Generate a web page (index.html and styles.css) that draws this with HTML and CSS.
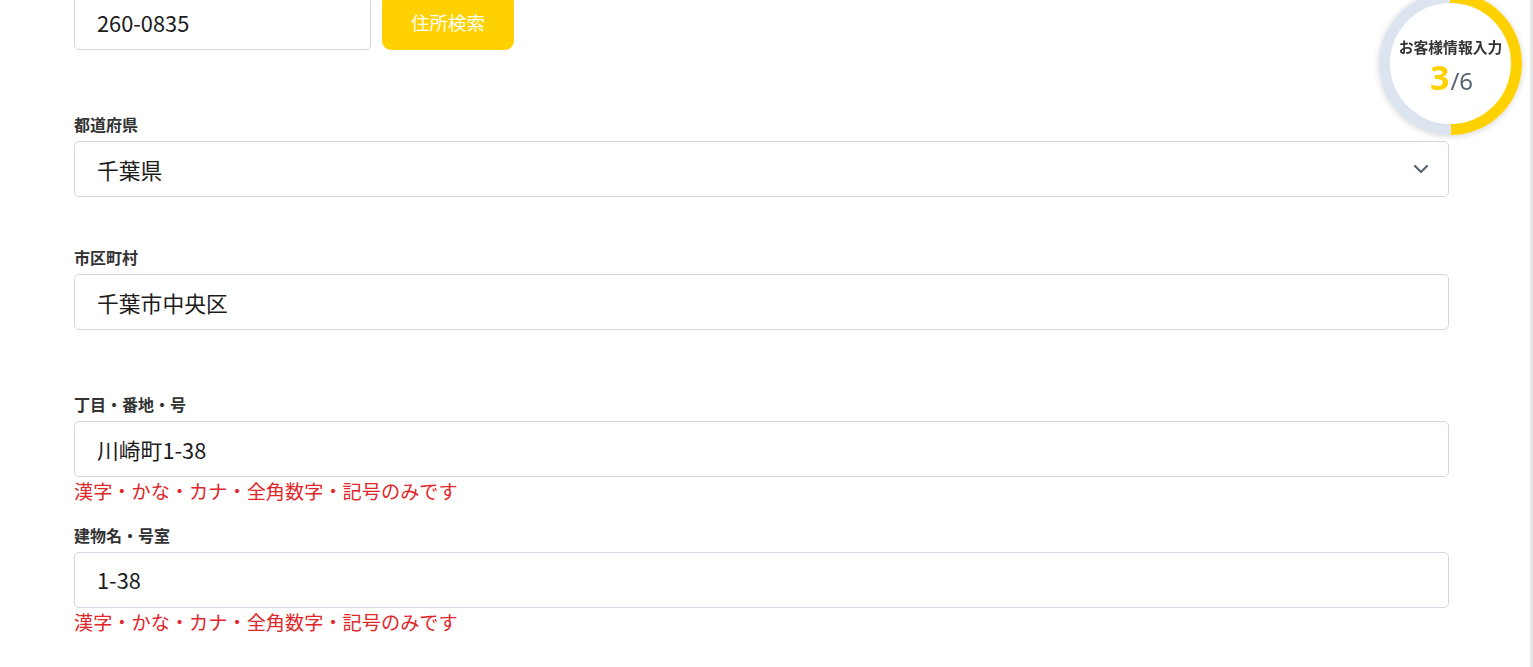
FILE: index.html
```html
<!DOCTYPE html>
<html lang="ja">
<head>
<meta charset="utf-8">
<title>お客様情報入力</title>
<link rel="stylesheet" href="styles.css">
</head>
<body>
<main class="form">
  <div class="zip-row">
    <input class="field zip" type="text" value="260-0835">
    <button class="search-btn" type="button">住所検索</button>
  </div>

  <div class="group gap-first">
    <label class="label">都道府県</label>
    <div class="select-wrap">
      <div class="field select">千葉県</div>
      <svg class="chevron" width="16" height="10" viewBox="0 0 16 10"><path d="M2 2l6 6 6-6" fill="none" stroke="#596273" stroke-width="2.2" stroke-linecap="round" stroke-linejoin="round"/></svg>
    </div>
  </div>

  <div class="group gap-md">
    <label class="label">市区町村</label>
    <input class="field" type="text" value="千葉市中央区">
  </div>

  <div class="group gap-lg">
    <label class="label">丁目・番地・号</label>
    <input class="field" type="text" value="川崎町1-38">
    <p class="error">漢字・かな・カナ・全角数字・記号のみです</p>
  </div>

  <div class="group gap-sm">
    <label class="label">建物名・号室</label>
    <input class="field" type="text" value="1-38">
    <p class="error">漢字・かな・カナ・全角数字・記号のみです</p>
  </div>
</main>

<div class="progress">
  <div class="progress-inner">
    <div class="progress-title">お客様情報入力</div>
    <div class="progress-count"><span class="cur">3</span><span class="total">/6</span></div>
  </div>
</div>

<div class="scroll-edge"></div>
</body>
</html>
```

FILE: styles.css
```css
html, body {
  margin: 0;
  padding: 0;
  background: #fff;
  overflow: hidden;
}

body {
  font-family: "Noto Sans CJK JP", "Noto Sans", sans-serif;
  color: #222;
}

.form {
  margin-top: -6px;
  padding-left: 74px;
  width: 1375px;
}

.zip-row {
  display: flex;
  gap: 11px;
}

.field {
  box-sizing: border-box;
  display: block;
  width: 100%;
  height: 56px;
  margin: 0;
  padding: 0 22px;
  border: 1px solid #cfd8e3;
  border-radius: 5px;
  background: #fff;
  font-family: "Noto Sans CJK JP", "Noto Sans", sans-serif;
  font-size: 21.8px;
  color: #1c1c1c;
  outline: none;
}

.field.zip {
  width: 297px;
}

.search-btn {
  width: 132px;
  height: 56px;
  border: 0;
  border-radius: 9px;
  background: #ffd100;
  color: #fff;
  font-family: "Noto Sans CJK JP", "Noto Sans", sans-serif;
  font-size: 18.5px;
  padding: 0;
}

.group {
  display: flex;
  flex-direction: column;
}

.gap-first { margin-top: 64px; }
.gap-lg { margin-top: 64px; }
.gap-md { margin-top: 50px; }
.gap-sm { margin-top: 19px; }

.label {
  font-size: 16px;
  font-weight: 700;
  line-height: 20px;
  color: #333;
  margin-bottom: 7px;
}

.select-wrap {
  position: relative;
}

.select {
  display: flex;
  align-items: center;
}

.chevron {
  position: absolute;
  right: 20px;
  top: 23px;
}

.error {
  margin: 0;
  font-size: 19.2px;
  line-height: 28.8px;
  color: #e0262a;
}

.progress {
  position: fixed;
  top: -8px;
  right: 11px;
  width: 143px;
  height: 143px;
  border-radius: 50%;
  background: conic-gradient(#ffd100 0deg 180deg, #dce5ef 180deg 360deg);
  box-shadow: 0 1px 6px rgba(0, 0, 0, 0.18);
  display: flex;
  align-items: center;
  justify-content: center;
}

.progress-inner {
  width: 121px;
  height: 121px;
  border-radius: 50%;
  background: #fff;
  display: flex;
  flex-direction: column;
  align-items: center;
  justify-content: center;
  padding-top: 10px;
  box-sizing: border-box;
}

.progress-title {
  font-size: 14.8px;
  font-weight: 700;
  color: #333;
  line-height: 20px;
  white-space: nowrap;
}

.progress-count {
  display: flex;
  align-items: baseline;
  line-height: 40px;
  margin-left: 2px;
}

.cur {
  font-family: "Noto Sans", sans-serif;
  font-size: 34px;
  font-weight: 700;
  color: #ffd100;
}

.total {
  font-family: "Noto Sans", sans-serif;
  font-size: 24px;
  color: #5b6475;
  margin-left: 1px;
}

.scroll-edge {
  position: fixed;
  top: 0;
  right: 0;
  width: 3px;
  height: 100%;
  background: #e6e6e6;
}
```
